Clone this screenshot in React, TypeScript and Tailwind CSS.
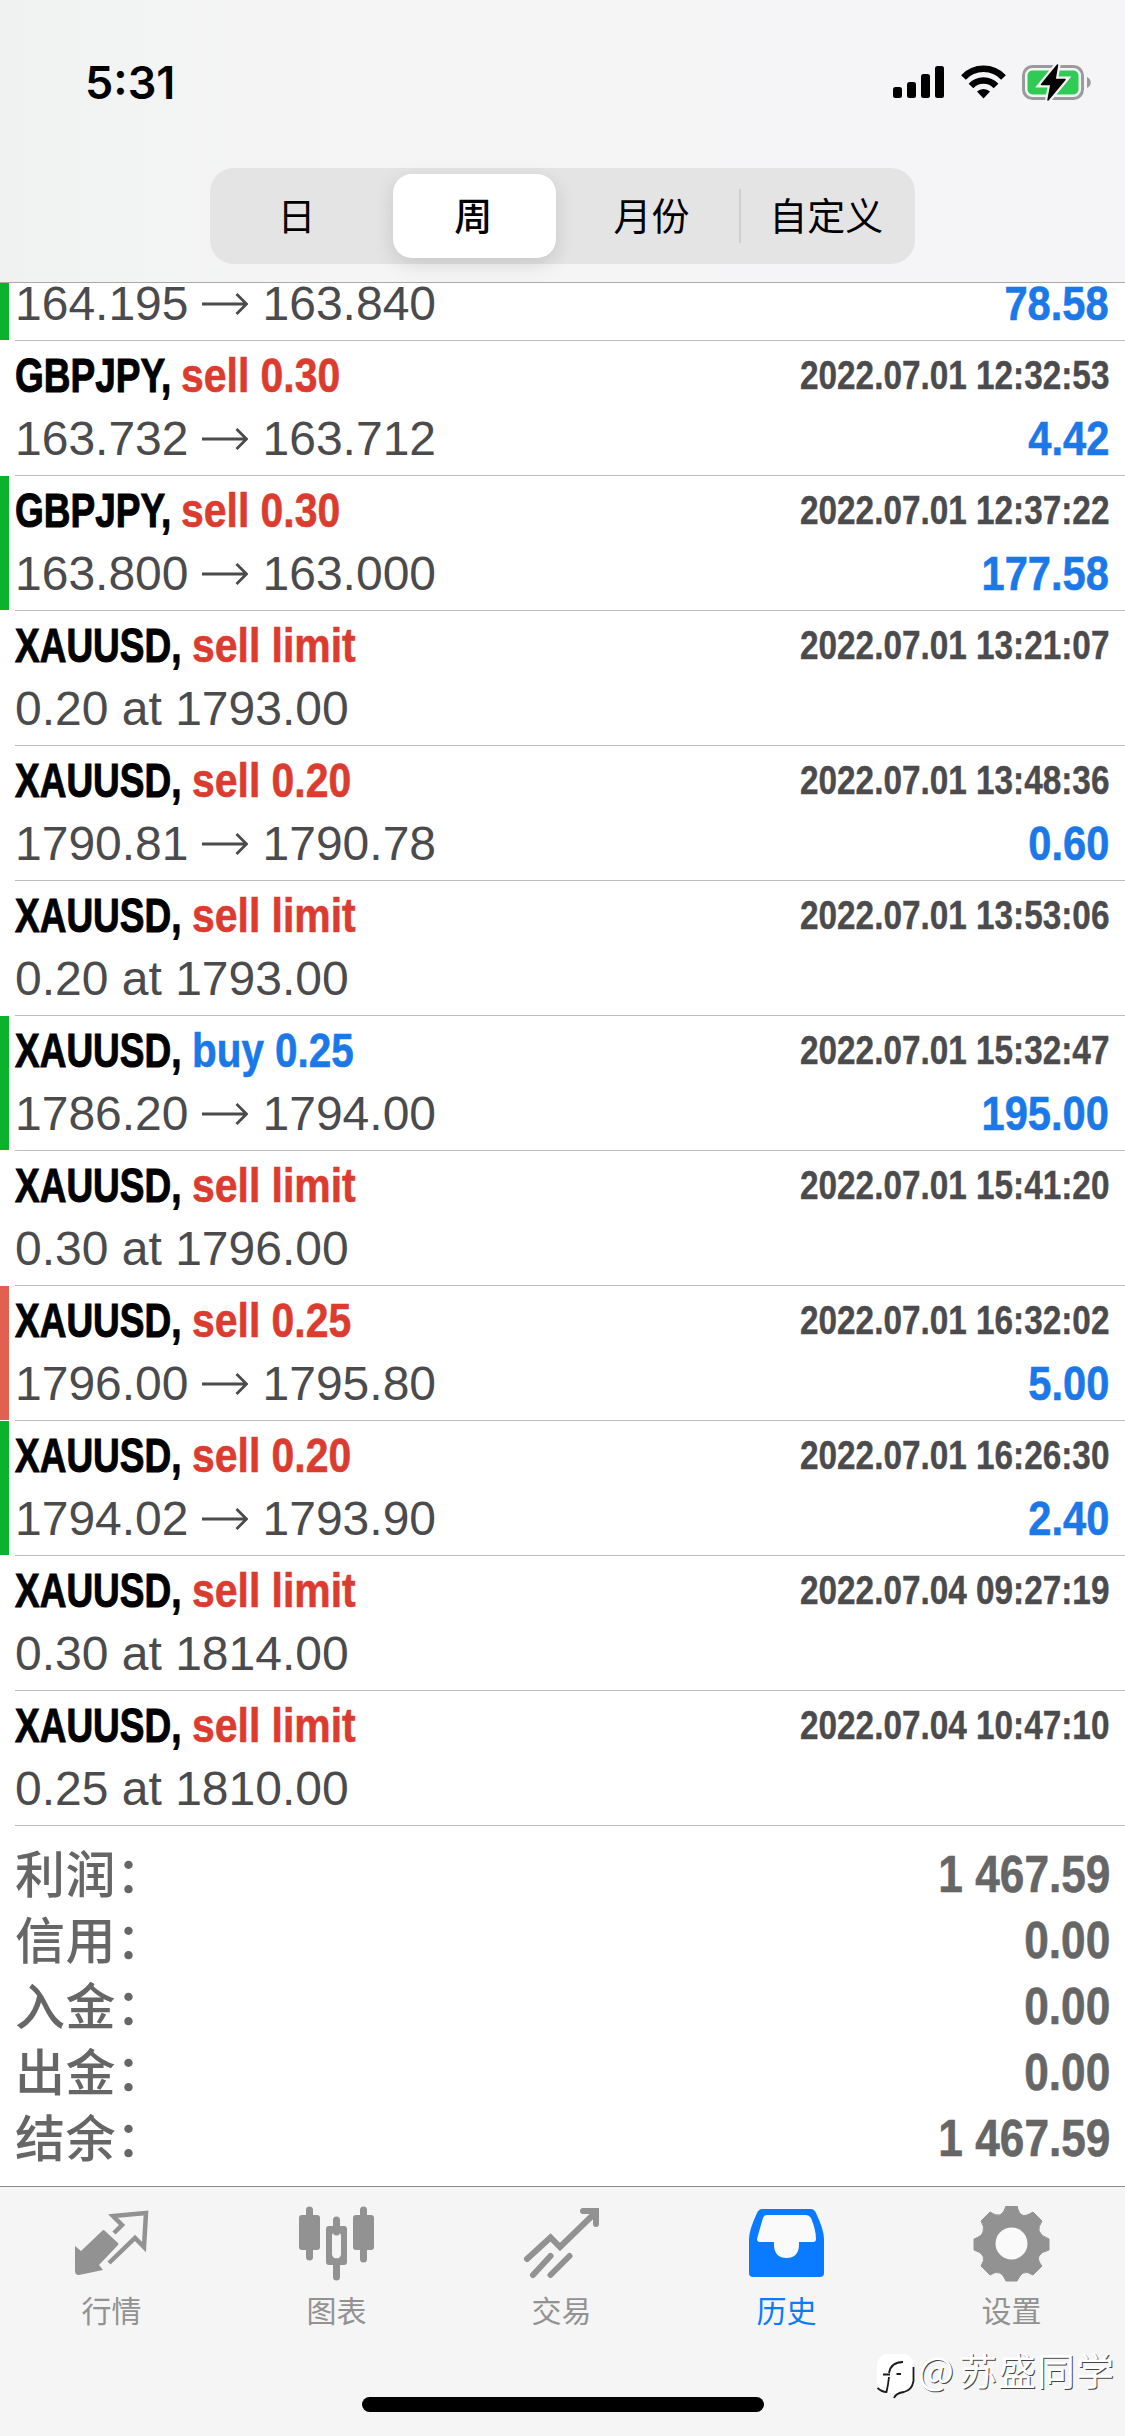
import React from "react";

type Deal = {
  symbol: string;
  action: string;
  side: "buy" | "sell";
  time: string;
  from: string;
  to?: string;
  profit?: string;
  mark?: "green" | "red";
};

const deals: Deal[] = [
  { symbol: "GBPJPY", action: "sell 0.30", side: "sell", time: "2022.07.01 12:32:53", from: "163.732", to: "163.712", profit: "4.42" },
  { symbol: "GBPJPY", action: "sell 0.30", side: "sell", time: "2022.07.01 12:37:22", from: "163.800", to: "163.000", profit: "177.58", mark: "green" },
  { symbol: "XAUUSD", action: "sell limit", side: "sell", time: "2022.07.01 13:21:07", from: "0.20 at 1793.00" },
  { symbol: "XAUUSD", action: "sell 0.20", side: "sell", time: "2022.07.01 13:48:36", from: "1790.81", to: "1790.78", profit: "0.60" },
  { symbol: "XAUUSD", action: "sell limit", side: "sell", time: "2022.07.01 13:53:06", from: "0.20 at 1793.00" },
  { symbol: "XAUUSD", action: "buy 0.25", side: "buy", time: "2022.07.01 15:32:47", from: "1786.20", to: "1794.00", profit: "195.00", mark: "green" },
  { symbol: "XAUUSD", action: "sell limit", side: "sell", time: "2022.07.01 15:41:20", from: "0.30 at 1796.00" },
  { symbol: "XAUUSD", action: "sell 0.25", side: "sell", time: "2022.07.01 16:32:02", from: "1796.00", to: "1795.80", profit: "5.00", mark: "red" },
  { symbol: "XAUUSD", action: "sell 0.20", side: "sell", time: "2022.07.01 16:26:30", from: "1794.02", to: "1793.90", profit: "2.40", mark: "green" },
  { symbol: "XAUUSD", action: "sell limit", side: "sell", time: "2022.07.04 09:27:19", from: "0.30 at 1814.00" },
  { symbol: "XAUUSD", action: "sell limit", side: "sell", time: "2022.07.04 10:47:10", from: "0.25 at 1810.00" },
];

const totals = [
  { label: "利润：", value: "1 467.59" },
  { label: "信用：", value: "0.00" },
  { label: "入金：", value: "0.00" },
  { label: "出金：", value: "0.00" },
  { label: "结余：", value: "1 467.59" },
];

function StatusBar() {
  return (
    <div className="flex h-[168px] items-start justify-between pt-[60px] pr-[33px] pl-[85px]">
      <span className="font-['Inter'] text-[45px] leading-[46px] font-semibold text-black">5:31</span>
      <svg width="200" height="44" viewBox="0 0 200 44" className="mt-[1px]">
        <g>
          <rect x="1" y="26" width="9" height="11" rx="2.5" />
          <rect x="15" y="21" width="9" height="16" rx="2.5" />
          <rect x="29" y="13" width="9" height="24" rx="2.5" />
          <rect x="43" y="5" width="9" height="32" rx="2.5" />
        </g>
        {/* wifi */}
        <g fill="none" stroke="#000" strokeWidth="6.5">
          <path d="M71.500 16.500a27.500 27.500 0 0 1 40 0" />
          <path d="M79 25a17 17 0 0 1 25 0" />
        </g>
        <path d="M85 30.500a9.500 9.500 0 0 1 13 0L91.500 37.500z" />
        {/* battery */}
        <rect x="131.500" y="5.500" width="59" height="32" rx="9" fill="none" stroke="#9b9b9e" strokeWidth="3" />
        <path d="M195 16c5 2 5 9 0 11z" fill="#9b9b9e" />
        <rect x="135.500" y="9.500" width="51" height="24" rx="5" fill="#2fcb55" />
        <path d="M165.500 4L149.500 23.500H159L156 39L173 18.500H163Z" stroke="#f5f5f7" strokeWidth="6" />
        <path d="M165.500 4L149.500 23.500H159L156 39L173 18.500H163Z" stroke="#000" strokeWidth="1.500" strokeLinejoin="round" />
      </svg>
    </div>
  );
}

function PeriodPicker() {
  return (
    <div className="ml-[210px] grid h-24 w-[705px] grid-cols-4 items-center rounded-[24px] bg-[#e5e4e5] text-center font-['Noto_Sans_CJK_SC',sans-serif] text-[38px] leading-[56px] text-black">
      <span className="pr-[3px] pb-[4px]">日</span>
      <span className="mx-[7px] flex h-[84px] items-center justify-center rounded-[19px] bg-white pr-[2px] pb-[4px] font-medium shadow-[0_6px_20px_rgba(0,0,0,0.13)]">
        周
      </span>
      <span className="pb-[4px] pl-[2px]">月份</span>
      <span className="flex h-[54px] items-center justify-center border-l-2 border-[#cfcfd1] pr-[3px] pb-[4px]">自定义</span>
    </div>
  );
}

function Arrow() {
  return (
    <svg width="46" height="22" viewBox="0 0 46 22" fill="none" stroke="#4b4b4d" strokeWidth="2.8">
      <path d="M0 11H44M34.500 1L44.500 11L34.500 21" />
    </svg>
  );
}

function Prices({ from, to }: { from: string; to?: string }) {
  return (
    <span className="flex items-center text-[48px] leading-[57px] whitespace-pre text-[#4b4b4d]">
      <span>{from}</span>
      {to && (
        <>
          <span className="mr-[15px] ml-[13px]">
            <Arrow />
          </span>
          <span>{to}</span>
        </>
      )}
    </span>
  );
}

function Profit({ value }: { value?: string }) {
  return (
    <span className="origin-right scale-x-[0.85] text-[49px] leading-[56px] font-bold text-[#1b78e8] [-webkit-text-stroke:0.6px]">
      {value}
    </span>
  );
}

function DealRow({ deal }: { deal: Deal }) {
  return (
    <div className="flex h-[135px]">
      <div
        className={
          deal.mark === "green"
            ? "mt-px w-[9px] bg-[#0ab32b]"
            : deal.mark === "red"
              ? "mt-px w-[9px] bg-[#e2604f]"
              : "w-[9px]"
        }
      />
      <div className="ml-[6px] flex-1 border-t border-[#bcbcbe] pr-[16px]">
        <div className="flex h-[69px] items-start justify-between pt-[6px] font-bold whitespace-nowrap">
          <div className="flex text-[49px] leading-[56px]">
            <span className={deal.symbol === "GBPJPY" ? "w-[166px]" : "w-[177px]"}>
              <span className="inline-block origin-left scale-x-[0.755] text-black [-webkit-text-stroke:1px]">{deal.symbol},</span>
            </span>
            <span
              className={
                deal.side === "buy"
                  ? "origin-left scale-x-[0.825] text-[#1b78e8] [-webkit-text-stroke:0.6px]"
                  : "origin-left scale-x-[0.835] text-[#db3c2f] [-webkit-text-stroke:0.6px]"
              }
            >
              {deal.action}
            </span>
          </div>
          <span className="origin-right scale-x-[0.833] pt-[5px] text-[40px] leading-[46px] text-[#4b4b4d] [-webkit-text-stroke:0.4px]">
            {deal.time}
          </span>
        </div>
        <div className="flex items-start justify-between">
          <Prices from={deal.from} to={deal.to} />
          <Profit value={deal.profit} />
        </div>
      </div>
    </div>
  );
}

const tabs = [
  {
    label: "行情",
    icon: (
      <>
        <path d="M32 25L45 37Q46 38 45 39L26 59L30 64L6 69Q2 69 2 65V40L8 45L29 25Q31 23 32 25Z" />
        <path d="M41 27L49 19L40 10L73 7L71 41L62 32L36 57" fill="none" stroke="currentColor" strokeWidth="4.500" />
      </>
    ),
  },
  {
    label: "图表",
    icon: (
      <>
        <path d="M11.500 4V51M65.500 4V53M38.500 14V26M38.500 56V71" stroke="currentColor" strokeWidth="7" strokeLinecap="round" />
        <rect x="1" y="9" width="21" height="35" rx="3" />
        <rect x="55" y="9" width="21" height="35" rx="3" />
        <path fillRule="evenodd" d="M31 20H46a3 3 0 0 1 3 3V56a3 3 0 0 1-3 3H31a3 3 0 0 1-3-3V23a3 3 0 0 1 3-3ZM38.500 25.500a4.500 4.500 0 0 0-4.500 4.500V48a4.500 4.500 0 0 0 9 0V30a4.500 4.500 0 0 0-4.500-4.500Z" />
      </>
    ),
  },
  {
    label: "交易",
    icon: (
      <g fill="none" stroke="currentColor" strokeWidth="6" strokeLinecap="round">
        <path d="M4 53L27.500 31.500L37 41L72 7" />
        <path d="M60 5H73V18" />
        <path d="M27.500 50L10 69M46.500 50L27.500 69" />
      </g>
    ),
  },
  {
    label: "历史",
    active: true,
    icon: (
      <>
        <path d="M14 3H63Q66 3 68 7Q76 24 76 33V67Q76 71 72 71H5Q1 71 1 67V33Q1 24 9 7Q11 3 14 3Z" />
        <path d="M19 9H58Q61 9 63 12Q68 24 68 33Q68 36 65 36H51V40Q50 52 38.500 52Q27 52 26 40V36H12Q9 36 9 33Q12 22 15 12Q16 9 19 9Z" fill="#fafafa" />
      </>
    ),
  },
  {
    label: "设置",
    icon: (
      <>
        <path
          d="M33 0H44Q46 8 49 9Q52 11 60 6L69 15Q65 21 66 25Q68 30 76 33V44Q68 46 66 50Q64 54 69 60L60 69Q54 65 50 67Q47 69 44 75H33Q30 68 27 67Q23 65 17 69L8 60Q12 54 10 50Q8 46 1 44V33Q9 30 10 26Q12 21 8 15L17 6Q23 10 27 9Q31 7 33 0Z"
          stroke="currentColor"
          strokeWidth="1"
          strokeLinejoin="round"
        />
        <circle cx="38.500" cy="37.500" r="16" fill="#fafafa" />
      </>
    ),
  },
];

function TabBar() {
  return (
    <nav className="relative flex h-[250px] flex-col border-t border-[#8b8b8b] bg-[#f5f5f5]">
      <div className="grid grid-cols-5 pt-[19px]">
        {tabs.map((tab) => (
          <div
            key={tab.label}
            className={
              tab.active ? "flex flex-col items-center pr-[2px] text-[#0a7aff]" : "flex flex-col items-center pr-[2px] text-[#929292]"
            }
          >
            <svg width="77" height="76" viewBox="0 0 77 76" fill="currentColor">
              {tab.icon}
            </svg>
            <span className="mt-[5px] font-['Noto_Sans_CJK_SC',sans-serif] text-[30px] leading-[44px]">{tab.label}</span>
          </div>
        ))}
      </div>
      <div className="mx-auto mt-auto mb-[24px] h-[15px] w-[402px] rounded-full bg-black" />
      <Watermark />
    </nav>
  );
}

function Watermark() {
  return (
    <div className="absolute right-[10px] bottom-[34px] flex items-start">
      <svg width="42" height="50" viewBox="0 0 42 50" className="mt-[8px]">
        <rect x="1" y="2" width="37" height="39" rx="11" fill="#fff" />
        <g fill="none" stroke="#1a1a1a" strokeWidth="1.800">
          <path d="M13 21Q15 10 27 10M7 22.500H14M20.500 22H25" />
          <path d="M13 25Q12 34 10.500 40Q6 40 1.500 36" />
          <path d="M37.500 15V29Q36 38 28 40Q20 41 18 46" />
        </g>
      </svg>
      <span className="flex font-['Noto_Sans_CJK_SC',sans-serif] text-[38px] leading-[50px] text-white [text-shadow:1px_1px_0.5px_#444]">
        <span className="w-[41px]">@</span>
        <span className="tracking-[1px]">苏盛同学</span>
      </span>
    </div>
  );
}

export default function App() {
  return (
    <div className="flex h-[2436px] w-[1125px] flex-col overflow-hidden bg-white font-['Liberation_Sans',sans-serif]">
      <header className="h-[283px] shrink-0 border-b border-[#a9a9ab] bg-linear-to-r from-[#f0f2f1] via-[#f5f5f5] via-30% to-[#f5f5f8]">
        <StatusBar />
        <PeriodPicker />
      </header>

      <main className="flex-1">
        {/* the first deal is scrolled halfway under the header */}
        <div className="flex h-[57px]">
          <div className="w-[9px] bg-[#0ab32b]" />
          <div className="-mt-[8px] ml-[6px] flex flex-1 items-start justify-between pr-[16px]">
            <Prices from="164.195" to="163.840" />
            <Profit value="78.58" />
          </div>
        </div>
        {deals.map((deal) => (
          <DealRow key={deal.time} deal={deal} />
        ))}
        <div className="ml-[15px] border-t border-[#bcbcbe] pt-[15px] pr-[15px]">
          {totals.map((row) => (
            <div key={row.label} className="flex h-[66px] items-start justify-between text-[#666]">
              <span className="-mt-[3px] font-['Noto_Sans_CJK_SC',sans-serif] text-[50px] leading-[66px] font-medium tracking-[0.5px]">
                {row.label}
              </span>
              <span className="origin-right scale-x-[0.85] text-[52px] leading-[66px] font-bold [-webkit-text-stroke:0.6px]">{row.value}</span>
            </div>
          ))}
        </div>
      </main>

      <TabBar />
    </div>
  );
}
